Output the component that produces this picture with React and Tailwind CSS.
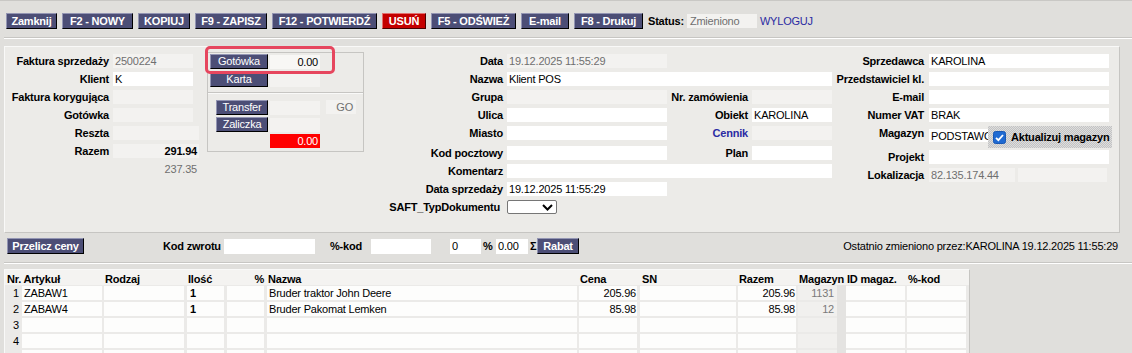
import React from 'react'

// shared bits
function Btn({ w, h = 'h-[16px]', red, bold = true, className = '', children }) {
  const tone = red
    ? 'bg-[#c40000] border-t-[#e37070] border-l-[#e37070] border-r-[#4a0000] border-b-[#4a0000]'
    : 'bg-[#4c4e76] border-t-[#9395b3] border-l-[#9395b3] border-r-black border-b-black'
  return (
    <div className={`${w} ${h} ${tone} ${bold ? 'font-bold' : ''} ${className} shrink-0 flex items-center justify-center text-white border whitespace-nowrap leading-none`}>
      {children}
    </div>
  )
}

function Inp({ w, h = 'h-[14px]', bg = 'bg-white', right, dim, bold, className = '', children }) {
  return (
    <div className={`${w} ${h} ${bg} ${right ? 'text-right' : ''} ${dim ? 'text-[#6f6f6f]' : ''} ${bold ? 'font-bold' : ''} ${className} shrink-0 px-[2px] leading-[14px] whitespace-nowrap overflow-hidden`}>
      {children}
    </div>
  )
}

const GRAY = 'bg-[#f3f2f0]'

function RowA({ label, children }) {
  return (
    <div className="flex items-center h-[14px] mb-[4px]">
      <div className="w-[104px] shrink-0 text-right font-bold whitespace-nowrap">{label}</div>
      <div className="ml-[4px]">{children}</div>
    </div>
  )
}

function RowC({ label, children, sub, subCls = '', subInput }) {
  return (
    <div className="flex items-center h-[14px] mb-[4px]">
      <div className="w-[136px] shrink-0 text-right font-bold whitespace-nowrap">{label}</div>
      <div className="ml-[4px]">{children}</div>
      {sub !== undefined && (
        <>
          <div className={`w-[81px] shrink-0 text-right font-bold whitespace-nowrap ${subCls}`}>{sub}</div>
          <div className="ml-[4px]">{subInput}</div>
        </>
      )}
    </div>
  )
}

function RowD({ label, children, className = '' }) {
  return (
    <div className={`flex items-center h-[14px] mb-[4px] ${className}`}>
      <div className="w-[92px] shrink-0 text-right font-bold whitespace-nowrap">{label}</div>
      <div className="ml-[5px] flex gap-[3px]">{children}</div>
    </div>
  )
}

const cell = 'h-[14px] my-[1px] shrink-0 whitespace-nowrap overflow-hidden leading-[14px]'
const white = 'bg-[#fdfdfc]'

function TRow({ n, art, qty, name, price, total, mag }) {
  return (
    <div className="flex h-[16px]">
      <div className="w-[17px] shrink-0 text-right pr-[3px] leading-[16px]">{n}</div>
      <div className={`${cell} ${white} w-[80px] pl-[2px]`}>{art}</div>
      <div className={`${cell} ${white} w-[80px] ml-[2px]`} />
      <div className={`${cell} ${white} w-[37px] ml-[3px] pl-[3px] font-bold`}>{qty}</div>
      <div className={`${cell} ${white} w-[37px] ml-[3px]`} />
      <div className={`${cell} ${white} w-[310px] ml-[3px] pl-[2px]`}>{name}</div>
      <div className={`${cell} ${white} w-[58px] ml-[2px] text-right pr-[1px]`}>{price}</div>
      <div className={`${cell} ${white} w-[96px] ml-[3px]`} />
      <div className={`${cell} ${white} w-[58px] ml-[2px] text-right pr-[1px]`}>{total}</div>
      <div className={`${cell} bg-[#f1f0ee] w-[39px] ml-[2px] text-right pr-[3px] text-[#7a7a7a]`}>{mag}</div>
      <div className="w-[9px] h-[16px] shrink-0 bg-[#e4e3e1]" />
      <div className={`${cell} ${white} w-[59px]`} />
      <div className={`${cell} ${white} w-[59px] ml-[2px]`} />
    </div>
  )
}

export default function App() {
  return (
    <div className="relative w-[1132px] h-[353px] overflow-hidden bg-[#e0dfdc] text-black text-[11px] leading-[14px] tracking-[-0.2px] font-['Liberation_Sans',Arial,sans-serif] border-t border-[#c9c8c5]">
      {/* top toolbar */}
      <div className="flex items-center h-[16px] mt-[12px] pl-[6px] gap-[5px]">
        <Btn w="w-[51px]">Zamknij</Btn>
        <Btn w="w-[71px]">F2 - NOWY</Btn>
        <Btn w="w-[52px]">KOPIUJ</Btn>
        <Btn w="w-[72px]">F9 - ZAPISZ</Btn>
        <Btn w="w-[105px]">F12 - POTWIERDŹ</Btn>
        <Btn w="w-[44px]" red>USUŃ</Btn>
        <Btn w="w-[85px]">F5 - ODŚWIEŻ</Btn>
        <Btn w="w-[48px]">E-mail</Btn>
        <Btn w="w-[69px]">F8 - Drukuj</Btn>
        <div className="font-bold">Status:</div>
        <Inp w="w-[70px]" bg={GRAY} dim className="ml-[-2px] px-[3px]">Zmieniono</Inp>
        <div className="ml-[-2px] text-[#2b2ba3]">WYLOGUJ</div>
      </div>

      <div className="mt-[8px] ml-[4px] border-t border-t-[#c7c6c3] border-b border-b-white" />

      {/* main form panel */}
      <div className="ml-[4px] mt-[7px] w-[1116px] h-[187px] flex items-start bg-[#ecebe8] border border-t-[#f9f9f8] border-l-[#f9f9f8] border-r-[#c6c5c2] border-b-[#c6c5c2]">
        {/* left column */}
        <div className="w-[195px] shrink-0 pt-[7px]">
          <RowA label="Faktura sprzedaży"><Inp w="w-[80px]" bg={GRAY} dim>2500224</Inp></RowA>
          <RowA label="Klient"><Inp w="w-[80px]">K</Inp></RowA>
          <RowA label="Faktura korygująca"><Inp w="w-[80px]" bg={GRAY} /></RowA>
          <RowA label="Gotówka"><Inp w="w-[80px]" bg={GRAY} /></RowA>
          <RowA label="Reszta"><Inp w="w-[86px]" bg={GRAY} /></RowA>
          <RowA label="Razem"><Inp w="w-[86px]" bg={GRAY} right bold>291.94</Inp></RowA>
          <div className="ml-[108px] w-[86px] h-[14px] pr-[2px] text-right text-[#6f6f6f]">237.35</div>
        </div>

        {/* payment box */}
        <div className="ml-[7px] mt-[5px] w-[157px] h-[100px] shrink-0 border border-[#c6c5c2] flex flex-col">
          <div className="flex items-center mt-[1px] pl-[2px] gap-[2px]">
            <Btn w="w-[58px]" h="h-[15px]" bold={false}>Gotówka</Btn>
            <Inp w="w-[50px]" bg="bg-[#f8f7f5]" right>0.00</Inp>
          </div>
          <div className="flex items-center mt-[3px] pl-[2px] gap-[2px]">
            <Btn w="w-[58px]" h="h-[15px]" bold={false}>Karta</Btn>
            <Inp w="w-[50px]" bg={GRAY} />
          </div>
          <div className="mt-[5px] border-t border-t-[#c6c5c2] border-b border-b-[#f9f9f8]" />
          <div className="flex items-center mt-[6px] pl-[8px] gap-[2px]">
            <Btn w="w-[52px]" h="h-[15px]" bold={false}>Transfer</Btn>
            <Inp w="w-[50px]" bg={GRAY} />
            <Inp w="w-[30px]" bg={GRAY} dim right className="ml-[4px] mt-[-2px] pr-[3px]">GO</Inp>
          </div>
          <div className="flex items-center mt-[2px] pl-[8px] gap-[2px]">
            <Btn w="w-[52px]" h="h-[15px]" bold={false}>Zaliczka</Btn>
            <Inp w="w-[50px]" bg={GRAY} />
          </div>
          <div className="mt-[2px] pl-[62px]">
            <Inp w="w-[50px]" bg="bg-[#ff0000]" right className="text-white">0.00</Inp>
          </div>
        </div>

        {/* middle column */}
        <div className="ml-[3px] w-[465px] shrink-0 pt-[7px]">
          <RowC label="Data"><Inp w="w-[160px]" bg={GRAY} dim>19.12.2025 11:55:29</Inp></RowC>
          <RowC label="Nazwa"><Inp w="w-[325px]">Klient POS</Inp></RowC>
          <RowC label="Grupa" sub="Nr. zamówienia" subInput={<Inp w="w-[80px]" bg={GRAY} />}>
            <Inp w="w-[160px]" bg={GRAY} />
          </RowC>
          <RowC label="Ulica" sub="Obiekt" subInput={<Inp w="w-[80px]">KAROLINA</Inp>}>
            <Inp w="w-[160px]" />
          </RowC>
          <RowC label="Miasto" sub="Cennik" subCls="text-[#2b2ba3]" subInput={<Inp w="w-[80px]" bg={GRAY} />}>
            <Inp w="w-[160px]" />
          </RowC>
          <div className="mt-[6px]">
            <RowC label="Kod pocztowy" sub="Plan" subInput={<Inp w="w-[80px]" />}>
              <Inp w="w-[160px]" />
            </RowC>
          </div>
          <div className="mt-[1px]">
            <RowC label="Komentarz"><Inp w="w-[325px]" /></RowC>
          </div>
          <RowC label="Data sprzedaży"><Inp w="w-[160px]">19.12.2025 11:55:29</Inp></RowC>
          <div className="flex items-center h-[14px] mt-[3px]">
            <div className="w-[136px] shrink-0 text-right font-bold pr-[3px] whitespace-nowrap">SAFT_TypDokumentu</div>
            <div className="ml-[4px] w-[50px] h-[14px] bg-white border border-[#767676] rounded-[2px] flex items-center justify-end pr-[3px]">
              <svg width="11" height="7" viewBox="0 0 11 7">
                <path d="M1 1 L5.5 5.5 L10 1" fill="none" stroke="black" strokeWidth="2" />
              </svg>
            </div>
          </div>
        </div>

        {/* right column */}
        <div className="pt-[7px]">
          <RowD label="Sprzedawca"><Inp w="w-[180px]">KAROLINA</Inp></RowD>
          <RowD label="Przedstawiciel kl."><Inp w="w-[180px]" /></RowD>
          <RowD label="E-mail"><Inp w="w-[180px]" /></RowD>
          <RowD label="Numer VAT"><Inp w="w-[180px]">BRAK</Inp></RowD>
          <div className="flex items-start h-[22px] mt-[1px]">
            <div className="w-[92px] shrink-0 text-right font-bold">Magazyn</div>
            <Inp w="w-[59px]" h="h-[13px]" className="ml-[5px] mt-[3px]">PODSTAWOWY</Inp>
            <div className="w-[124px] h-[22px] shrink-0 flex items-center bg-[image:repeating-conic-gradient(#c3c3c3_0_25%,#dddddd_0_50%)] bg-[length:2px_2px]">
              <svg className="ml-[5px]" width="13" height="13" viewBox="0 0 13 13">
                <rect x="0.5" y="0.5" width="12" height="12" rx="2" fill="#1f6ad2" stroke="#1958b4" />
                <path d="M3 6.8 L5.4 9.2 L10 4" fill="none" stroke="white" strokeWidth="1.8" />
              </svg>
              <span className="ml-[5px] font-bold whitespace-nowrap">Aktualizuj magazyn</span>
            </div>
          </div>
          <RowD label="Projekt" className="mt-[2px]"><Inp w="w-[180px]" /></RowD>
          <RowD label="Lokalizacja">
            <Inp w="w-[86px]" bg={GRAY} dim>82.135.174.44</Inp>
            <Inp w="w-[89px]" bg={GRAY} />
          </RowD>
        </div>
      </div>

      {/* bottom action row */}
      <div className="flex items-center h-[16px] mt-[5px] pl-[7px]">
        <Btn w="w-[77px]">Przelicz ceny</Btn>
        <div className="ml-[79px] w-[57px] shrink-0 font-bold whitespace-nowrap">Kod zwrotu</div>
        <Inp w="w-[91px]" h="h-[15px]" className="ml-[4px]" />
        <div className="ml-[15px] w-[32px] shrink-0 font-bold whitespace-nowrap">%-kod</div>
        <Inp w="w-[60px]" h="h-[15px]" className="ml-[9px]" />
        <Inp w="w-[31px]" h="h-[15px]" className="ml-[19px]">0</Inp>
        <div className="ml-[2px] w-[8px] shrink-0 font-bold">%</div>
        <Inp w="w-[32px]" h="h-[15px]" className="ml-[5px]">0.00</Inp>
        <div className="ml-[2px] w-[5px] shrink-0 font-bold">Σ</div>
        <Btn w="w-[42px]" className="ml-[2px]">Rabat</Btn>
        <div className="ml-auto pr-[14px] whitespace-nowrap">Ostatnio zmieniono przez:KAROLINA 19.12.2025 11:55:29</div>
      </div>

      <div className="mt-[8px] ml-[4px] border-t border-t-[#c7c6c3] border-b border-b-white" />

      {/* positions table */}
      <div className="mt-[5px] ml-[4px] w-[966px] h-[90px] bg-[#ebeae8] border border-t-[#f9f9f8] border-l-[#f9f9f8] border-r-[#c6c5c2] border-b-0">
        <div className="flex h-[15px] pt-[2px] font-bold whitespace-nowrap bg-[#f4f3f1]">
          <div className="w-[97px] shrink-0 pl-[2px]">Nr. Artykuł</div>
          <div className="w-[80px] shrink-0 ml-[2px] pl-[1px]">Rodzaj</div>
          <div className="w-[37px] shrink-0 ml-[3px] pl-[1px]">Ilość</div>
          <div className="w-[37px] shrink-0 ml-[3px] text-right">%</div>
          <div className="w-[310px] shrink-0 ml-[3px] pl-[1px]">Nazwa</div>
          <div className="w-[58px] shrink-0 ml-[2px] pl-[1px]">Cena</div>
          <div className="w-[96px] shrink-0 ml-[3px] pl-[2px]">SN</div>
          <div className="w-[58px] shrink-0 ml-[2px] pl-[1px]">Razem</div>
          <div className="w-[48px] shrink-0 ml-[2px] pl-[1px]">Magazyn</div>
          <div className="w-[59px] shrink-0 pl-[1px]">ID magaz.</div>
          <div className="w-[59px] shrink-0 ml-[2px] pl-[1px]">%-kod</div>
        </div>
        <TRow n="1" art="ZABAW1" qty="1" name="Bruder traktor John Deere" price="205.96" total="205.96" mag="1131" />
        <TRow n="2" art="ZABAW4" qty="1" name="Bruder Pakomat Lemken" price="85.98" total="85.98" mag="12" />
        <TRow n="3" />
        <TRow n="4" />
        <TRow />
      </div>

      {/* highlight drawn over the cash payment row */}
      <div className="absolute left-[205px] top-[45px] w-[130px] h-[28px] border-[3px] border-[#e6465e] rounded-[5px]" />
    </div>
  )
}
